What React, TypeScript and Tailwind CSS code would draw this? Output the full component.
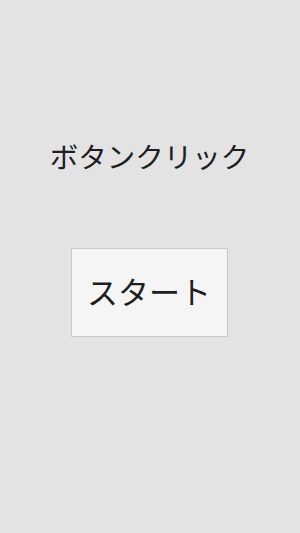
export default function App() {
  return (
    <div
      className="flex min-h-[533px] w-full flex-col items-center bg-[#e3e3e3] pt-[136px] text-[#1e1e1e]"
      style={{ fontFamily: '"Noto Sans CJK JP", "Noto Sans", sans-serif' }}
    >
      <div className="h-[40px] pr-[1px] text-[28.5px] leading-[40px]">ボタンクリック</div>
      <button className="mt-[72px] mr-[2px] flex h-[89px] w-[157px] items-center justify-center border border-[#c9c9c9] bg-[#f5f5f5] pb-[5px] text-[31px] leading-none">
        スタート
      </button>
    </div>
  );
}
